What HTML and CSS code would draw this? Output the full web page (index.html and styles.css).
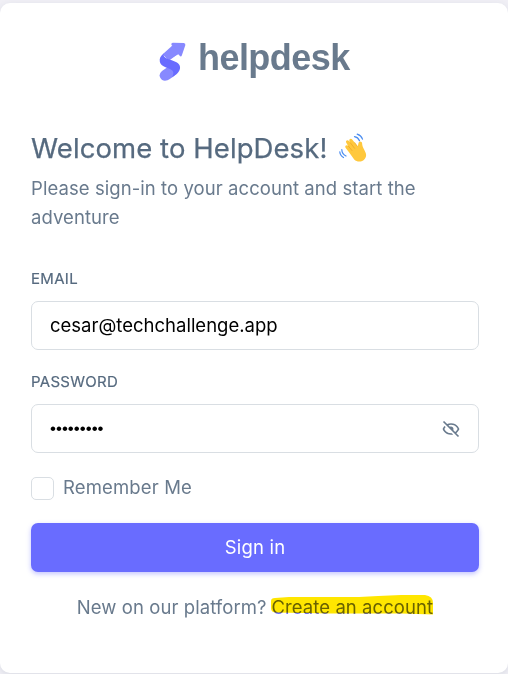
FILE: index.html
```html
<!DOCTYPE html>
<html lang="en">
<head>
<meta charset="utf-8">
<title>HelpDesk</title>
<link rel="stylesheet" href="styles.css">
</head>
<body>
<main class="card">
  <div class="brand">
    <svg class="logo" viewBox="0 0 27 40" aria-hidden="true">
      <path fill="#8789ff" d="M14.500 4.500 12.600 3.200Q11.700.9 14 .7L24.800 1Q26.800 1.200 26.300 3.200L22.800 13.500Q22 15.200 20.700 13.700L19 12 10.500 18.300 3.500 12.400z"/>
      <path fill="#8789ff" d="M14.500 2.500 4 12 9 18 19.500 12z"/>
      <path fill="#8789ff" d="M9.500 24.500 3 29Q-.5 31.800 1.200 35.500 3.500 40 8.500 38.300 12 36.500 18 31.800L17 26z"/>
      <path fill="#696cff" d="M4.400 11.700C1.500 13.700.3 16.500.8 19.500 1.500 23 4 24.300 9.800 26.500 14.500 28.300 15.500 30.500 13.200 35.200L18.500 31.300C22.200 27.500 22 22.700 17.500 20.300 14.500 18.600 11 18 8.300 16.800 5.700 15.600 4.300 14 4.400 11.700z"/>
    </svg>
    <span class="brand-name">helpdesk</span>
  </div>
  <h1 class="title"><span class="title-text">Welcome to HelpDesk!</span>
    <svg class="wave" viewBox="0 0 32 30" aria-hidden="true">
      <path fill="#ffc83d" d="M10.2 19.5 6.7 14.9c-1.500-2 1-3.800 2.500-2L7.400 10C6 7.800 8.500 6.200 10 8l1.100 1.500-.6-1.200C9.500 6 12 4.800 13.400 6.700l5.400 6.800.7-3.500c.4-2.400 3.500-2 3.600.3.100 2 .6 3.600 2 6.200 1.700 3.300 3.300 6 .6 9.400-3 3.700-7.700 3.300-10.500.5z"/>
      <path class="finger-line" d="m9.200 12.900 4 4.900m-2.100-8.300 4.700 6.100m-.3-6.300 3 4.200"/>
      <path class="motion" d="M15.500 3.700q3.500.5 5 4M18.200 1.100q4 1.200 5.300 5M2.800 16.500q.1 4.500 4.200 6.500M.8 18.800q.2 3.700 3.700 5.700"/>
    </svg>
  </h1>
  <p class="intro">Please sign-in to your account and start the<br>adventure</p>
  <form class="form">
    <label class="label email-label" for="email">EMAIL</label>
    <div class="field"><input id="email" class="input" type="text" value="cesar@techchallenge.app"></div>
    <label class="label password-label" for="password">PASSWORD</label>
    <div class="field">
      <span id="password" class="dots">•••••••••</span>
      <svg class="eye" viewBox="0 0 24 24" aria-hidden="true"><path d="M12 19c.946 0 1.810-.103 2.598-.281l-1.757-1.757c-.273.021-.55.038-.841.038-5.351 0-7.424-3.846-7.926-5a8.642 8.642 0 0 1 1.508-2.297L4.184 8.305c-1.538 1.667-2.121 3.346-2.132 3.379a.994.994 0 0 0 0 .633C2.073 12.383 4.367 19 12 19zm0-14c-1.837 0-3.346.396-4.604.981L3.707 2.293 2.293 3.707l18 18 1.414-1.414-3.319-3.319c2.614-1.951 3.547-4.615 3.561-4.657a.994.994 0 0 0 0-.633C21.927 11.617 19.633 5 12 5zm4.972 10.558-2.280-2.280c.19-.39.308-.819.308-1.278 0-1.641-1.359-3-3-3-.459 0-.888.118-1.277.309L8.915 7.501A9.260 9.260 0 0 1 12 7c5.351 0 7.424 3.846 7.926 5-.302.692-1.166 2.342-2.954 3.558z"/></svg>
    </div>
    <label class="remember"><input class="check" type="checkbox"><span>Remember Me</span></label>
    <button class="submit" type="button">Sign in</button>
  </form>
  <p class="signup"><span>New on our platform?</span>
    <a class="create"><span>Create an account</span>
      <svg class="marker" viewBox="0 0 163 20" aria-hidden="true"><path fill="#ffe600" d="M0 6Q0 3 4 3L18 2 88 2 107 1 130 0H154Q162 1 162 8V19.500L130 18.500H60L4 17.500Q0 17 0 13z"/></svg>
    </a>
  </p>
</main>
</body>
</html>
```
FILE: styles.css
```css
* { box-sizing: border-box; }
body {
  margin: 0;
  height: 674px;
  padding: 3px 0 1px;
  overflow: hidden;
  background: #f0eff5;
  font-family: Inter, "Liberation Sans", sans-serif;
  font-size: 18.5px;
  color: #697a8d;
}
.card {
  height: 670px;
  padding: 39px 29px 0 31px;
  background: #fff;
  border-radius: 10px;
  box-shadow: 0 2px 6px rgba(67, 89, 113, .12);
}
.brand {
  display: flex;
  justify-content: center;
  align-items: flex-start;
  gap: 12px;
  height: 40px;
  margin-left: -2px;
}
.logo { width: 27px; height: 40px; }
.brand-name {
  font: 700 36px/32px "Liberation Sans", sans-serif;
  width: 151px;
  letter-spacing: -.55px;
}
.title {
  display: flex;
  align-items: center;
  height: 36px;
  margin: 48px 0 0;
  font-size: 27.5px;
  font-weight: 400;
  line-height: 36px;
  color: #566a7f;
  -webkit-text-stroke: .25px #566a7f;
}
.title-text { width: 308px; white-space: nowrap; letter-spacing: .08px; }
.wave { width: 32px; height: 30px; }
.finger-line { fill: none; stroke: #e99b22; stroke-width: .6; }
.motion { fill: none; stroke: #4b8df0; stroke-width: 1.2; stroke-linecap: round; }
.intro { margin: 8px 0 0; line-height: 29px; white-space: nowrap; letter-spacing: .07px; }
.form { display: flex; flex-direction: column; }
.label {
  height: 22px;
  font-size: 15px;
  line-height: 22px;
  font-weight: 400;
  letter-spacing: .3px;
  color: #566a7f;
  -webkit-text-stroke: .2px #566a7f;
}
.email-label { margin-top: 36px; }
.password-label { margin-top: 21px; }
.field {
  display: flex;
  align-items: center;
  justify-content: space-between;
  height: 49px;
  margin-top: 11px;
  padding: 0 17px 0 18px;
  border: 1px solid #d9dee3;
  border-radius: 7px;
}
.input {
  width: 100%;
  height: 29px;
  padding: 0 0 2px;
  border: 0;
  outline: 0;
  font: inherit;
  color: #000;
  background: none;
}
.dots { color: #000; font: 17px/20px "Liberation Sans", sans-serif; }
.eye { width: 20px; height: 20px; fill: #697a8d; }
.remember {
  display: flex;
  align-items: center;
  gap: 9px;
  height: 28px;
  margin-top: 20px;
  letter-spacing: .15px;
}
.check {
  appearance: none;
  width: 23px;
  height: 23px;
  margin: 3px 0 0;
  border: 1px solid #d9dee3;
  border-radius: 5px;
}
.submit {
  height: 49px;
  margin-top: 22px;
  padding: 0 0 1px;
  border: 0;
  border-radius: 7px;
  background: #696cff;
  box-shadow: 0 2px 5px rgba(105, 108, 255, .4);
  font: inherit;
  letter-spacing: .2px;
  color: #fff;
}
.signup {
  display: flex;
  justify-content: center;
  gap: 5px;
  margin: 21px 0 0;
  line-height: 29px;
  white-space: nowrap;
  letter-spacing: .07px;
}
.create { position: relative; color: #696cff; }
.marker {
  position: absolute;
  left: -1px;
  top: 2px;
  width: 163px;
  height: 20px;
  mix-blend-mode: multiply;
}
```
